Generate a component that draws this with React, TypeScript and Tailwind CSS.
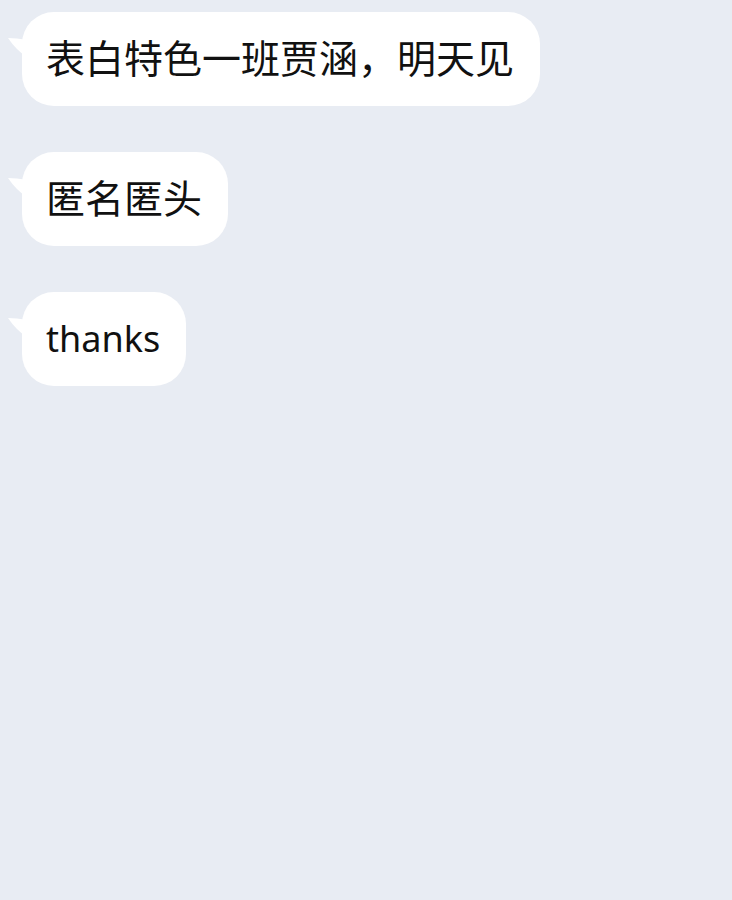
import React from "react";

const Tail = () => (
  <svg
    className="absolute left-[-14px] top-[24px]"
    width="20"
    height="24"
    viewBox="0 0 20 24"
  >
    <path d="M0 2 Q8 2 20 4 L20 22 Q8 14 0 2 Z" fill="#ffffff" />
  </svg>
);

const Bubble = ({ text, latin }: { text: string; latin?: boolean }) => (
  <div className="relative self-start rounded-[32px] bg-white h-[94px] flex items-center pl-[24px] pr-[26px] text-[#111111] leading-none">
    <Tail />
    {latin ? (
      <span
        className="relative text-[36px]"
        style={{ fontFamily: '"Noto Sans", sans-serif' }}
      >
        {text}
      </span>
    ) : (
      <span className="relative text-[39px] top-[-3px]">{text}</span>
    )}
  </div>
);

export default function App() {
  return (
    <div
      className="w-[732px] h-[900px] bg-[#e8ecf3] flex flex-col gap-[46px] pl-[22px] pt-[12px]"
      style={{ fontFamily: '"Noto Sans CJK SC", "Noto Sans", sans-serif' }}
    >
      <Bubble text="表白特色一班贾涵，明天见" />
      <Bubble text="匿名匿头" />
      <Bubble text="thanks" latin />
    </div>
  );
}
